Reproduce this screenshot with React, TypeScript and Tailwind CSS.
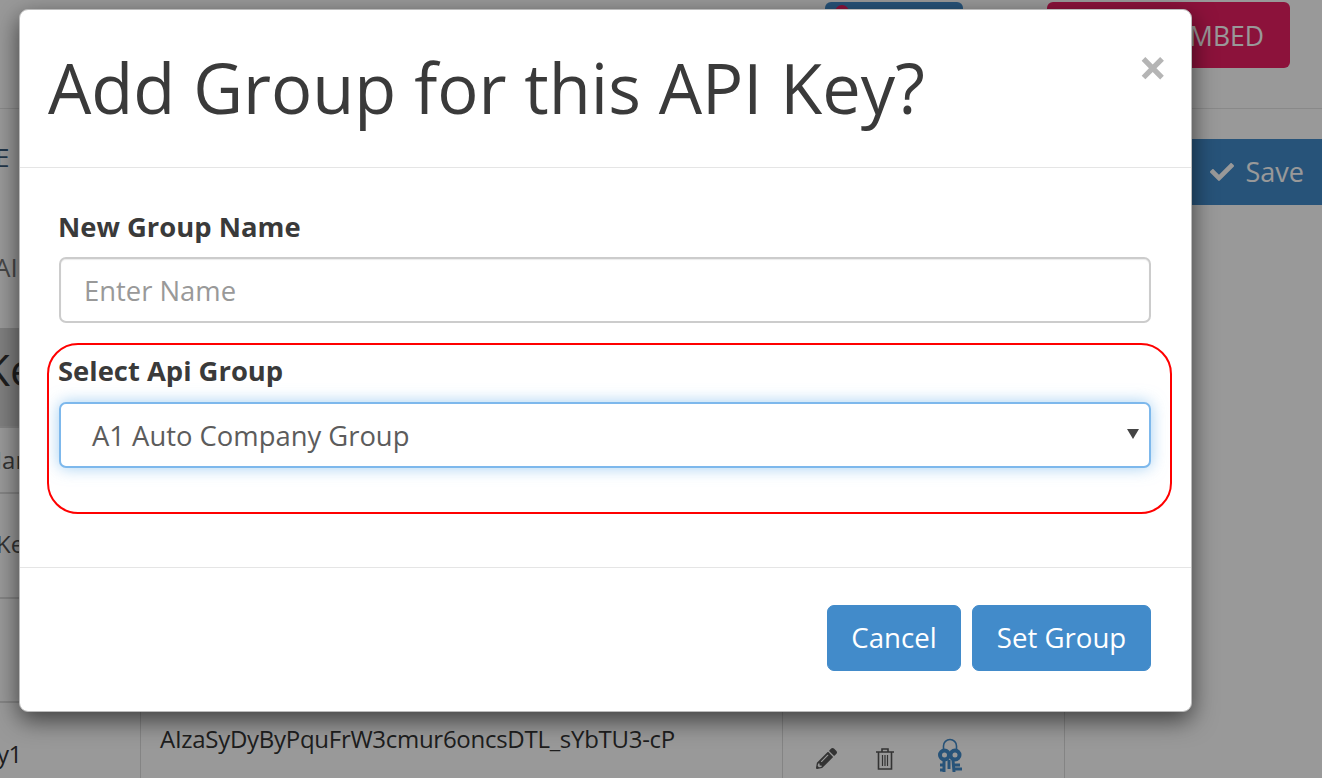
import * as React from "react"
import { FaCheck, FaPencilAlt } from "react-icons/fa"

const FONT = "font-['Open_Sans',sans-serif]"

function KeysIcon() {
    return (
        <svg width="26" height="36" viewBox="0 0 26 36" fill="none" className="text-[#428bca]">
            <path d="M6.5 13V8a6.5 6.5 0 0 1 13 0v5" stroke="currentColor" strokeWidth="1.6" />
            <circle cx="7.5" cy="17" r="4.5" stroke="currentColor" strokeWidth="4" />
            <circle cx="18" cy="17" r="4.5" stroke="currentColor" strokeWidth="4" />
            <path d="M7 22v12M7 27h-4M7 32h-4M16 22l1 12M17 27h6M17 31h8M12 22v9" stroke="currentColor" strokeWidth="3" />
        </svg>
    )
}

function TrashIcon() {
    return (
        <svg width="20" height="24" viewBox="0 0 20 24" fill="none" stroke="currentColor" strokeWidth="1.6">
            <path d="M1 5h18M7 5V2h6v3M3.5 5v17h13V5" />
            <path d="M7.5 8v11M10 8v11M12.5 8v11" strokeWidth="1.2" />
        </svg>
    )
}

// page behind the dialog, dimmed by the backdrop
function BackgroundPage() {
    return (
        <div className="w-full h-full bg-white overflow-hidden text-[#555]">
            <div className="h-[109px] border-b border-[#e5e5e5] flex justify-end items-start pt-[2px] pr-[32px] gap-[84px]">
                <div className="relative w-[138px] h-[66px] rounded-[6px] bg-[#428bca]">
                    <span className="absolute left-[10px] top-[3px] w-[14px] h-[14px] rounded-full bg-[#e91e63]" />
                </div>
                <div className="w-[243px] h-[66px] rounded-[6px] bg-[#e91e63] text-white text-[26.5px] flex items-center justify-end pr-[26px] pt-[3px]">
                    EMBED
                </div>
            </div>
            <div className="h-[219px] flex flex-col">
                <div className="flex items-start justify-between pt-[30px]">
                    <span className="-ml-[5px] text-[26px] text-[#3a5a7a] leading-[36px]">E</span>
                    <div className="w-[200px] h-[66px] bg-[#428bca] rounded-l-[6px] flex items-center justify-end pr-[18px] gap-[12px] text-white text-[27px]">
                        <FaCheck className="text-[24px]" />
                        Save
                    </div>
                </div>
                <span className="-ml-[6px] mt-[44px] text-[26px] leading-[36px] text-[#777]">AI</span>
            </div>
            <div className="w-[1065px]">
                <div className="h-[98px] bg-[#d4d4d4] flex items-center text-[44px] text-[#333] -ml-[17px] pb-[16px]">Key</div>
                <div className="h-[66px] border-t-2 border-[#ddd] flex items-center text-[24px] -ml-[16px]">Name</div>
                <div className="h-[105px] border-t-2 border-[#ddd] flex items-center text-[24px] -ml-[4px] pb-[4px]">Key</div>
                <div className="h-[104px] border-t-2 border-[#ddd]" />
                <div className="border-t-2 border-[#ddd] flex h-[77px] text-[24px] text-[#333]">
                    <div className="w-[140px] shrink-0 flex items-start pt-[33px] -ml-[30px] justify-start">
                        <span className="tracking-tight">Key1</span>
                    </div>
                    <div className="w-[642px] border-l border-[#ddd] pl-[19px] pt-[20px] ml-[30px] tracking-[-0.28px] leading-[32px]">
                        AIzaSyDyByPquFrW3cmur6oncsDTL_sYbTU3-cP
                    </div>
                    <div className="w-[282px] border-l border-[#ddd] flex items-start gap-[38px] pl-[33px] pt-[35px] text-[#555]">
                        <FaPencilAlt className="text-[21px] mt-[10px]" />
                        <span className="mt-[9px]"><TrashIcon /></span>
                        <span className="ml-[4px]"><KeysIcon /></span>
                    </div>
                    <div className="border-l border-[#ddd]" />
                </div>
            </div>
        </div>
    )
}

function AddGroupModal() {
    return (
        <div className="absolute left-[19px] top-[9px] w-[1173px] h-[703px] bg-white rounded-[9px] border border-[#bbb] shadow-[0_8px_24px_rgba(0,0,0,0.6)] flex flex-col">
            <div className="relative h-[158px] shrink-0 border-b border-[#e5e5e5] pl-[28px] pt-[34px]">
                <h4 className="text-[68.6px] leading-[88px] font-normal text-[#3a3a3a]">Add Group for this API Key?</h4>
                <button className="absolute right-[24px] top-[28px] text-[50px] leading-[58px] font-bold text-[#b5b5b5]">×</button>
            </div>
            <div className="h-[400px] shrink-0 border-b border-[#e5e5e5] pt-[41px] pl-[39px] pr-[40px]">
                <label className="block -ml-[1px] text-[27.4px] leading-[36px] font-bold text-[#3a3a3a]">New Group Name</label>
                <input
                    type="text"
                    placeholder="Enter Name"
                    readOnly
                    className="mt-[12px] block w-full h-[66px] px-[23px] rounded-[7px] border-2 border-[#ccc] bg-white text-[27.4px] outline-none placeholder:text-[#999] shadow-[inset_0_1px_1px_rgba(0,0,0,0.08)]"
                />
                <div className="relative mt-[20px] ml-[-12px] mr-[-21px] h-[171px] rounded-[31px] border-2 border-[#f00] pt-[8px] pl-[10px] pr-[19px]">
                    <label className="block -ml-[1px] text-[27.4px] leading-[36px] font-bold text-[#3a3a3a]">Select Api Group</label>
                    <div className="mt-[13px] h-[66px] rounded-[7px] border-2 border-[#7db8ec] bg-white shadow-[0_0_16px_rgba(102,175,233,0.6)] flex items-center justify-between pl-[31px] pr-[10px] pt-[2px] text-[27.4px] text-[#5c5c5c]">
                        A1 Auto Company Group
                        <span className="-mt-[5px] w-0 h-0 border-x-[6px] border-x-transparent border-t-[10px] border-t-[#444]" />
                    </div>
                </div>
            </div>
            <div className="flex-1 flex items-start justify-end gap-[11px] pt-[37px] pr-[40px]">
                <button className="w-[134px] h-[66px] rounded-[7px] bg-[#428bca] text-white text-[27.6px] border border-[#428bca]">Cancel</button>
                <button className="w-[179px] h-[66px] rounded-[7px] bg-[#428bca] text-white text-[27.6px] border border-[#428bca]">Set Group</button>
            </div>
        </div>
    )
}

export default function App() {
    return (
        <div className={`relative w-[1322px] h-[778px] overflow-hidden ${FONT}`}>
            <BackgroundPage />
            <div className="absolute inset-0 bg-black/40" />
            <AddGroupModal />
        </div>
    )
}
